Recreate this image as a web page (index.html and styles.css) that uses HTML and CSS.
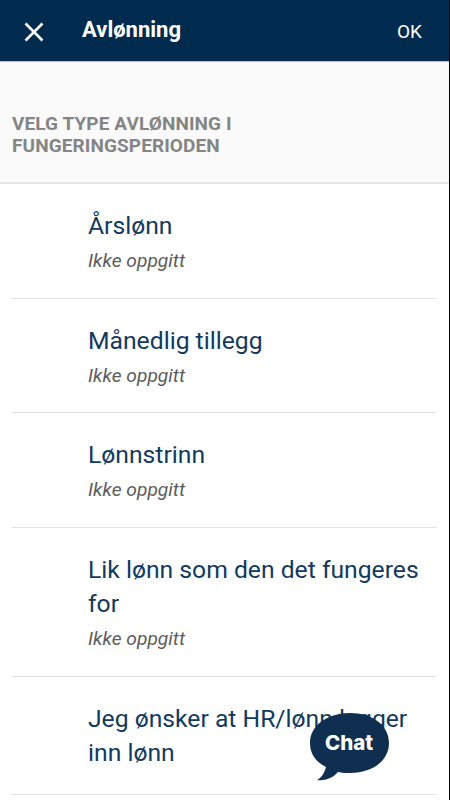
FILE: index.html
```html
<!DOCTYPE html>
<html lang="no">
<head>
<meta charset="utf-8">
<title>Avlønning</title>
<link rel="stylesheet" href="styles.css">
</head>
<body>
<div class="app">
  <header class="bar">
    <svg class="close" width="20" height="20" viewBox="0 0 20 20"><path d="M1.5 1.5L18.5 18.5M18.5 1.5L1.5 18.5" stroke="#fff" stroke-width="2.6" fill="none"/></svg>
    <h1 class="bar-title">Avlønning</h1>
    <span class="ok">OK</span>
  </header>
  <section class="section-head">
    <h2 class="section-title">VELG TYPE AVLØNNING I FUNGERINGSPERIODEN</h2>
  </section>
  <ul class="list">
    <li class="row"><div class="row-title">Årslønn</div><div class="row-sub">Ikke oppgitt</div></li>
    <li class="row"><div class="row-title">Månedlig tillegg</div><div class="row-sub">Ikke oppgitt</div></li>
    <li class="row"><div class="row-title">Lønnstrinn</div><div class="row-sub">Ikke oppgitt</div></li>
    <li class="row"><div class="row-title">Lik lønn som den det fungeres for</div><div class="row-sub">Ikke oppgitt</div></li>
    <li class="row row-last"><div class="row-title">Jeg ønsker at HR/lønn legger inn lønn</div></li>
  </ul>
  <div class="chat">
    <svg class="bubble" width="80" height="70" viewBox="0 0 80 70"><path d="M40 1C18 1 0 13 0 31C0 42 6 50 16 55C14 62 11 66 7 68C15 69 23 66 28 60C32 61 36 61 40 61C62 61 79 49 79 31C79 13 62 1 40 1Z" fill="#0f2e50"/></svg>
    <span class="chat-label">Chat</span>
  </div>
</div>
</body>
</html>
```
FILE: styles.css
```css
* { box-sizing: border-box; }
html, body { margin: 0; padding: 0; background: #000; }
body { font-family: Roboto, "Liberation Sans", sans-serif; }
.app { position: relative; width: 449px; height: 800px; overflow: hidden; background: #fff; }
.bar { height: 62px; background: #002a4e; border-bottom: 1px solid #b9c2cb; display: flex; align-items: center; padding: 0 27px 0 24px; color: #fff; }
.close { flex: none; margin-top: 2px; }
.bar-title { margin: 0 0 2px 38px; font-size: 22px; font-weight: 700; flex: 1; line-height: 28px; }
.ok { font-size: 19px; margin-top: 1px; }
.section-head { height: 122px; background: #fafafa; border-bottom: 2px solid #e6e6e6; padding: 51px 12px 0; }
.section-title { margin: 0; width: 260px; font-size: 19px; line-height: 22px; font-weight: 700; color: #858585; letter-spacing: 0.1px; }
.list { list-style: none; margin: 0; padding: 0 12px; }
.row { padding: 25px 0 19.7px 76px; border-bottom: 1px solid #e3e3e3; }
.row-last { padding-bottom: 24px; }
.row-title { font-size: 24.7px; line-height: 34px; color: #123a5e; }
.row-sub { font-size: 19.2px; line-height: 35px; font-style: italic; color: #5c5c5c; }
.chat { position: absolute; left: 310px; top: 712px; width: 80px; height: 70px; }
.bubble { display: block; }
.chat-label { position: absolute; left: -2px; right: 0; top: 18px; text-align: center; color: #fff; font-family: Inter, sans-serif; font-weight: 800; font-size: 20.5px; line-height: 26px; }
```
